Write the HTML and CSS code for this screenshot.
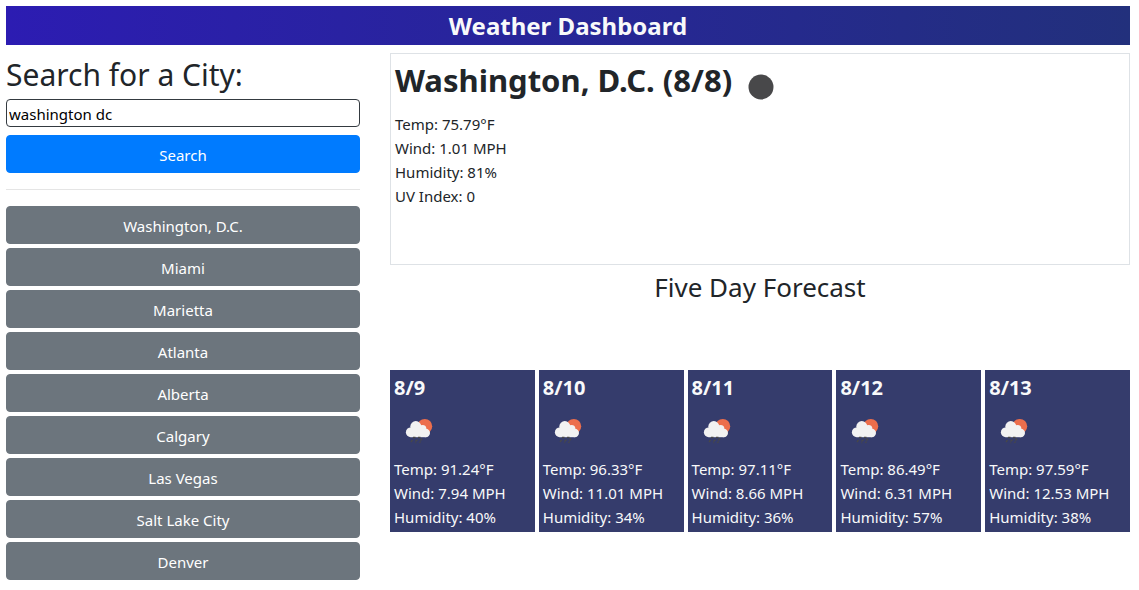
FILE: index.html
```html
<!DOCTYPE html>
<html lang="en">
<head>
<meta charset="utf-8">
<meta name="viewport" content="width=device-width, initial-scale=1">
<title>Weather Dashboard</title>
<link rel="stylesheet" href="styles.css">
</head>
<body>
<svg class="sprite" aria-hidden="true">
  <symbol id="sun-rain" viewBox="0 0 50 50">
    <circle cx="30.800" cy="22.300" r="7.400" fill="#ec6e4c"/>
    <g fill="#f2f2f2">
      <circle cx="16.800" cy="28.300" r="4.900"/>
      <circle cx="21.800" cy="22.600" r="5.500"/>
      <circle cx="28.500" cy="25" r="3.900"/>
      <circle cx="31.800" cy="29" r="4.200"/>
      <path d="M16.800 33.200V26h15v7.200z"/>
    </g>
    <path d="M19 33.500h2.500M24 33.500h2.500M18.500 36l-1.500 2M23.500 35.500l-2 2M28 34.500l-1.500 2M22 38.500l-.5.500M26.500 37.500l-1 1.500" stroke="#484849" stroke-width="1.300" fill="none"/>
  </symbol>
</svg>
<header class="banner"><h1 class="banner-title">Weather Dashboard</h1></header>
<main class="dashboard">
  <aside class="sidebar">
    <form class="search">
      <label class="search-label" for="city">Search for a City:</label>
      <input class="search-input" id="city" type="text" value="washington dc">
      <button class="button primary" type="button">Search</button>
    </form>
    <hr class="divider">
    <div class="history">
      <button class="button" type="button">Washington, D.C.</button>
      <button class="button" type="button">Miami</button>
      <button class="button" type="button">Marietta</button>
      <button class="button" type="button">Atlanta</button>
      <button class="button" type="button">Alberta</button>
      <button class="button" type="button">Calgary</button>
      <button class="button" type="button">Las Vegas</button>
      <button class="button" type="button">Salt Lake City</button>
      <button class="button" type="button">Denver</button>
    </div>
  </aside>
  <div class="content">
    <section class="current">
      <h2 class="current-title">Washington, D.C. (8/8)
        <svg class="current-icon" viewBox="0 0 50 50" role="img" aria-label="Cloudy"><circle cx="25" cy="25" r="12.500" fill="#48484a"/></svg>
      </h2>
      <p class="reading">Temp: 75.79°F</p>
      <p class="reading">Wind: 1.01 MPH</p>
      <p class="reading">Humidity: 81%</p>
      <p class="reading">UV Index: 0</p>
    </section>
    <section class="forecast">
      <h2 class="forecast-title">Five Day Forecast</h2>
      <div class="days">
        <article class="day">
          <h3 class="day-title">8/9</h3>
          <svg class="day-icon" role="img" aria-label="Rain"><use href="#sun-rain"/></svg>
          <p class="reading">Temp: 91.24°F</p><p class="reading">Wind: 7.94 MPH</p><p class="reading">Humidity: 40%</p>
        </article>
        <article class="day">
          <h3 class="day-title">8/10</h3>
          <svg class="day-icon" role="img" aria-label="Rain"><use href="#sun-rain"/></svg>
          <p class="reading">Temp: 96.33°F</p><p class="reading">Wind: 11.01 MPH</p><p class="reading">Humidity: 34%</p>
        </article>
        <article class="day">
          <h3 class="day-title">8/11</h3>
          <svg class="day-icon" role="img" aria-label="Rain"><use href="#sun-rain"/></svg>
          <p class="reading">Temp: 97.11°F</p><p class="reading">Wind: 8.66 MPH</p><p class="reading">Humidity: 36%</p>
        </article>
        <article class="day">
          <h3 class="day-title">8/12</h3>
          <svg class="day-icon" role="img" aria-label="Rain"><use href="#sun-rain"/></svg>
          <p class="reading">Temp: 86.49°F</p><p class="reading">Wind: 6.31 MPH</p><p class="reading">Humidity: 57%</p>
        </article>
        <article class="day">
          <h3 class="day-title">8/13</h3>
          <svg class="day-icon" role="img" aria-label="Rain"><use href="#sun-rain"/></svg>
          <p class="reading">Temp: 97.59°F</p><p class="reading">Wind: 12.53 MPH</p><p class="reading">Humidity: 38%</p>
        </article>
      </div>
    </section>
  </div>
</main>
</body>
</html>
```
FILE: styles.css
```css
* { box-sizing: border-box; }
body {
  margin: 0;
  padding: 6px 9px 10px 6px;
  background: #fff;
  color: #212529;
  font: 15px/24px "Segoe UI", "Noto Sans", "Open Sans", sans-serif;
}
h1, h2, h3, p { margin: 0; }
.sprite { display: none; }
.banner {
  padding: 4px;
  background: linear-gradient(to right, #2c1cb2, #22307c);
  color: #f8f9fa;
  text-align: center;
}
.banner-title { font-size: 24px; line-height: 31px; font-weight: 700; }
.dashboard {
  display: grid;
  grid-template-columns: minmax(0, 354fr) minmax(0, 740fr);
  gap: 30px;
  padding-top: 8px;
}
.search { display: flex; flex-direction: column; }
.search-label { font-size: 30px; line-height: 38px; padding: 3px 0 5px; }
.search-input {
  width: 100%;
  height: 28px;
  margin-bottom: 8px;
  padding: 2px 2px 0;
  border: 1px solid #343a40;
  border-radius: 4px;
  background: #fff;
  color: #000;
  font: inherit;
}
.button {
  width: 100%;
  padding: 7px 12px 5px;
  border: 1px solid #6c757d;
  border-radius: 4px;
  background: #6c757d;
  color: #fff;
  font: inherit;
  text-align: center;
}
.primary { border-color: #007bff; background: #007bff; }
.divider { margin: 16px 0; border: 0; border-top: 1px solid #e5e5e5; }
.history { display: flex; flex-direction: column; gap: 4px; }
.current {
  min-height: 212px;
  padding: 0 4px;
  border: 1px solid #dee2e6;
}
.current-title {
  display: flex;
  align-items: flex-start;
  gap: 4px;
  font-size: 31px;
  line-height: 52px;
  font-weight: 700;
}
.current-icon { width: 50px; height: 50px; margin-top: 8px; }
.forecast-title {
  padding-top: 4px;
  font-size: 26px;
  line-height: 36px;
  font-weight: 400;
  text-align: center;
}
.days {
  display: grid;
  grid-template-columns: repeat(5, minmax(0, 1fr));
  gap: 4px;
  margin-top: 65px;
}
.day { padding: 4px 4px 3px; background: #353c6c; color: #f8f9fa; }
.day-title { font-size: 20px; line-height: 28px; font-weight: 700; }
.day-icon { display: block; width: 50px; height: 50px; margin: 2px 0 3px; }
```
